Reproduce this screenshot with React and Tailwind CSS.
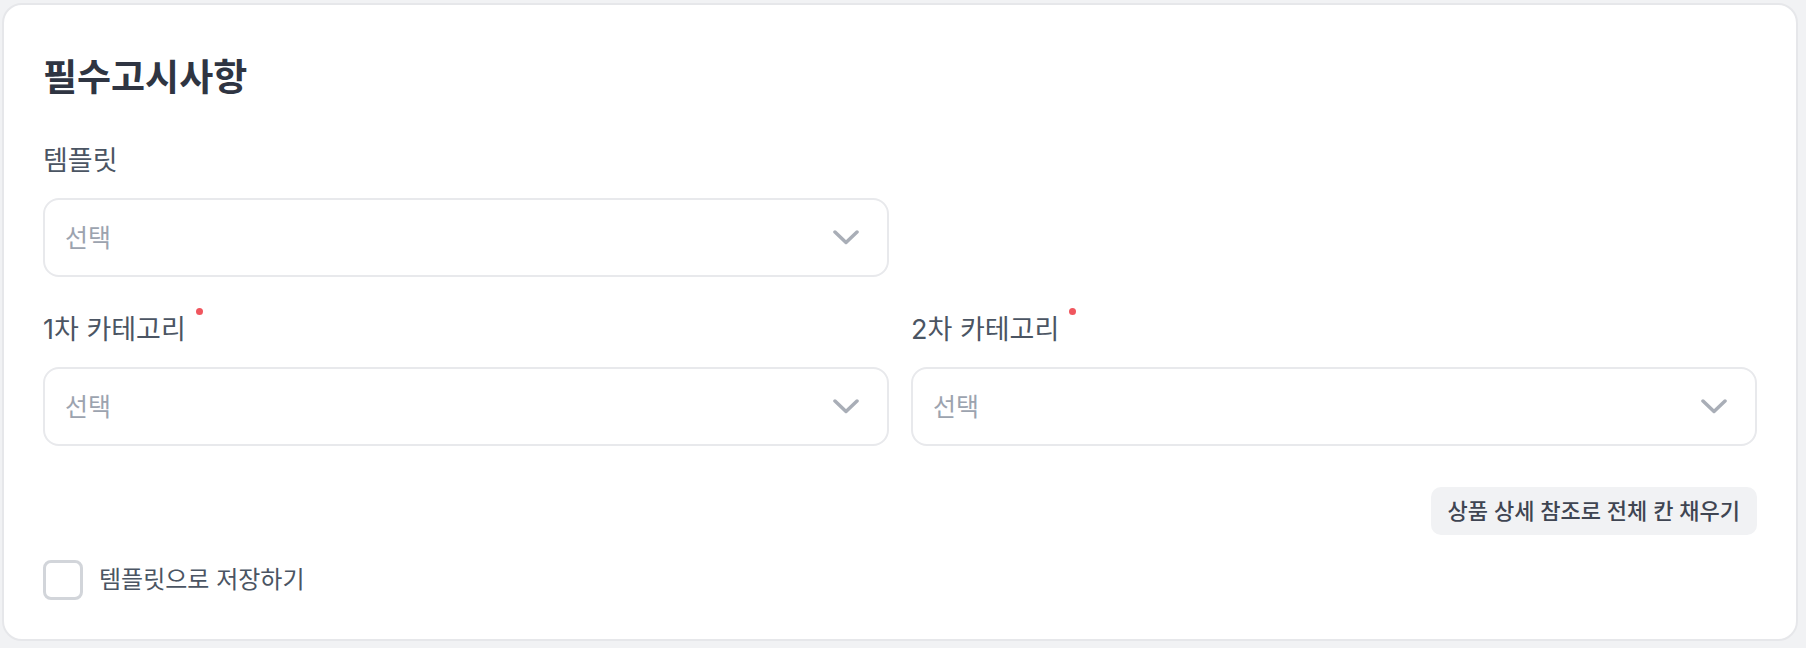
import React from "react";

function Chevron() {
  return (
    <svg width="26" height="15" viewBox="0 0 26 15" fill="none" className="shrink-0">
      <polyline
        points="2,2 13,12.5 24,2"
        stroke="#a9aeb7"
        strokeWidth="3.5"
        strokeLinecap="round"
        strokeLinejoin="round"
      />
    </svg>
  );
}

function SelectBox() {
  return (
    <div className="h-[79px] rounded-[16px] border-2 border-[#e8e9ec] bg-white flex items-center justify-between pl-[20px] pr-[28px]">
      <span className="text-[25px] leading-[34px] text-[#9ca3af]">선택</span>
      <Chevron />
    </div>
  );
}

function FieldLabel({ children, required }) {
  return (
    <div className="h-[34px] flex items-center">
      <span className="relative text-[27px] leading-[34px] text-[#4b5563]">
        {children}
        {required && (
          <span className="absolute -right-[17px] top-[-5px] w-[7px] h-[7px] rounded-full bg-[#f0565e]" />
        )}
      </span>
    </div>
  );
}

export default function App() {
  return (
    <div
      className="w-[1806px] h-[648px] bg-[#f1f2f4] pt-[3px] pl-[2px]"
      style={{ fontFamily: 'Inter, "Noto Sans CJK KR", sans-serif' }}
    >
      <div className="w-[1796px] h-[638px] bg-white border-2 border-[#e6e7ea] rounded-[20px] px-[39px] pt-[49px]">
        <h2 className="text-[37px] leading-[48px] font-bold text-[#2f3542]">필수고시사항</h2>

        <div className="mt-[42px] grid grid-cols-2 gap-x-[22px]">
          <div className="flex flex-col gap-[20px]">
            <FieldLabel>템플릿</FieldLabel>
            <SelectBox />
          </div>
        </div>

        <div className="mt-[36px] grid grid-cols-2 gap-x-[22px]">
          <div className="flex flex-col gap-[20px]">
            <FieldLabel required>1차 카테고리</FieldLabel>
            <SelectBox />
          </div>
          <div className="flex flex-col gap-[20px]">
            <FieldLabel required>2차 카테고리</FieldLabel>
            <SelectBox />
          </div>
        </div>

        <div className="mt-[41px] flex justify-end">
          <button className="h-[48px] px-[17px] rounded-[10px] bg-[#f1f2f4] text-[22px] font-medium text-[#3f4552]">
            상품 상세 참조로 전체 칸 채우기
          </button>
        </div>

        <label className="mt-[25px] flex items-center gap-[16px] w-fit">
          <span className="w-[40px] h-[40px] rounded-[8px] border-[3px] border-[#d2d5da] bg-white" />
          <span className="text-[24px] leading-[32px] text-[#4b5563]">템플릿으로 저장하기</span>
        </label>
      </div>
    </div>
  );
}
